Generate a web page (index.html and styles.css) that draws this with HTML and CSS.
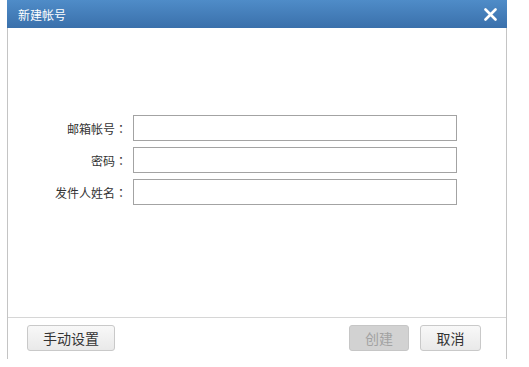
FILE: index.html
```html
<!DOCTYPE html>
<html>
  <head>
    <meta charset="utf-8" />
    <title>新建帐号</title>
    <link rel="stylesheet" href="styles.css">
  </head>
  <body>
    <div class="dialog">
      <div class="title-bar">
        <div class="title">新建帐号</div>
        <div class="close">
          <svg width="13" height="13" viewBox="0 0 13 13">
            <path d="M1.5 1.5 L11.5 11.5 M11.5 1.5 L1.5 11.5" stroke="#fff" stroke-width="2.6" stroke-linecap="round" />
          </svg>
        </div>
      </div>
      <div class="dialog-body">
        <div class="form">
          <label class="label">邮箱帐号<span class="colon">：</span></label>
          <input class="field" type="text" />
          <label class="label">密码<span class="colon">：</span></label>
          <input class="field" type="password" />
          <label class="label">发件人姓名<span class="colon">：</span></label>
          <input class="field" type="text" />
        </div>
      </div>
      <div class="footer">
        <div class="btn btn-manual">手动设置</div>
        <div class="right-btns">
          <div class="btn btn-disabled">创建</div>
          <div class="btn">取消</div>
        </div>
      </div>
    </div>
  </body>
</html>
```

FILE: styles.css
```css
* {
  padding: 0;
  margin: 0;
  box-sizing: border-box;
}
body {
  background: #fff;
  font-family: "Liberation Sans", "Noto Sans CJK SC", sans-serif;
  color: #333;
}
.dialog {
  width: 500px;
  margin-left: 7px;
  border-left: 1px solid #c4c4c4;
  border-right: 1px solid #c4c4c4;
}
.title-bar {
  height: 28px;
  margin: 0 -1px;
  background: linear-gradient(#4f8cc8, #3a70ab);
  display: flex;
  align-items: center;
  justify-content: space-between;
  padding: 0 10px 0 11px;
}
.title {
  color: #fff;
  font-size: 12px;
}
.close {
  display: flex;
  margin-top: 1px;
}
.dialog-body {
  height: 289px;
  padding-top: 87px;
}
.form {
  display: grid;
  grid-template-columns: 119px 324px;
  column-gap: 6px;
  row-gap: 6px;
  align-items: center;
}
.label {
  text-align: right;
  font-size: 12px;
  color: #333;
}
.colon {
  font-family: "Noto Sans CJK TC", sans-serif;
}
.field {
  height: 26px;
  border: 1px solid #a3a3a3;
  background: #fff;
  outline: none;
}
.footer {
  height: 42px;
  border-top: 1px solid #d6d6d6;
  display: flex;
  align-items: flex-start;
  justify-content: space-between;
  padding: 7px 25px 0 19px;
}
.right-btns {
  display: flex;
  gap: 11px;
}
.btn {
  width: 61px;
  height: 26px;
  border: 1px solid #c9c9c9;
  border-radius: 3px;
  background: linear-gradient(#f8f8f8, #e9e9e9);
  font-size: 14px;
  color: #333;
  display: flex;
  align-items: center;
  justify-content: center;
}
.btn-manual {
  width: 88px;
}
.btn-disabled {
  width: 60px;
  background: #d2d2d2;
  border-color: #c6c6c6;
  color: #a2a2a2;
}
```
